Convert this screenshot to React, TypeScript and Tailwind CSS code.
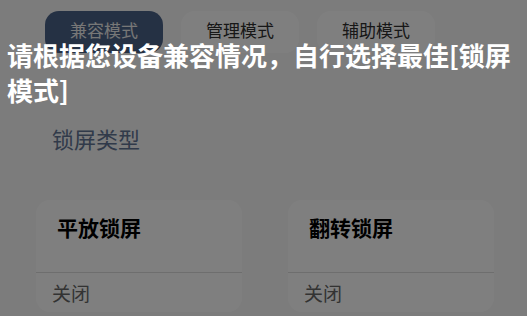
const tabs = [
  { label: "兼容模式", active: true },
  { label: "管理模式", active: false },
  { label: "辅助模式", active: false },
];

const cards = [
  { title: "平放锁屏", status: "关闭" },
  { title: "翻转锁屏", status: "关闭" },
];

export default function App() {
  return (
    <div className="relative h-[316px] w-[527px] overflow-hidden bg-[#f8f8f8] font-['Noto_Sans_CJK_SC','Noto_Sans',sans-serif]">
      {/* page */}
      <div className="flex gap-[18px] pl-[45px] pt-[11px]">
        {tabs.map((t) => (
          <div
            key={t.label}
            className={
              t.active
                ? "flex h-[42px] w-[118px] items-center justify-center rounded-[14px] bg-[#4a6288] pb-[4px] text-[17px] text-[#eeeeee]"
                : "flex h-[42px] w-[118px] items-center justify-center rounded-[14px] bg-white pb-[4px] text-[17px] text-[#2e2e2e]"
            }
          >
            {t.label}
          </div>
        ))}
      </div>

      <div className="mt-[69px] pl-[52px] text-[22px] leading-[32px] text-[#627594]">锁屏类型</div>

      <div className="mt-[46px] flex gap-[46px] pl-[36px]">
        {cards.map((c) => (
          <div key={c.title} className="h-[112px] w-[206px] overflow-hidden rounded-[14px] bg-white">
            <div className="h-[72px] pl-[21px] pt-[13px] text-[21px] font-bold leading-[28px] text-black">
              {c.title}
            </div>
            <div className="border-t border-[#dcdcdc] pl-[16px] pt-[7px] text-[19px] leading-[26px] text-[#666666]">
              {c.status}
            </div>
          </div>
        ))}
      </div>

      {/* guide overlay */}
      <div className="absolute inset-0 bg-black/50 px-[7px] pt-[37px]">
        <p className="text-[26px] font-bold leading-[35px] text-white">
          请根据您设备兼容情况，自行选择最佳[锁屏模式]
        </p>
      </div>
    </div>
  );
}
